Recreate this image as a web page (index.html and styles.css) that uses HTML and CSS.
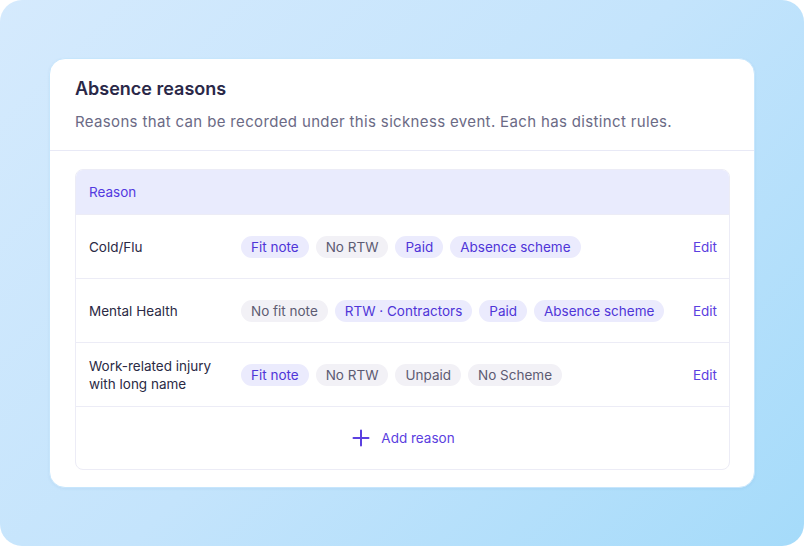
FILE: index.html
```html
<!DOCTYPE html>
<html>
	<head>
		<meta charset="UTF-8">
		<title>Absence reasons</title>
		<link rel="stylesheet" href="styles.css">
	</head>
	<body>
		<div class="stage">
			<div class="panel">
				<div class="panel-head">
					<h2 class="title">Absence reasons</h2>
					<p class="desc">Reasons that can be recorded under this sickness event. Each has distinct rules.</p>
				</div>
				<div class="panel-body">
					<div class="table">
						<div class="thead">Reason</div>

						<div class="row">
							<div class="name">Cold/Flu</div>
							<div class="tags">
								<span class="tag on">Fit note</span>
								<span class="tag">No RTW</span>
								<span class="tag on">Paid</span>
								<span class="tag on">Absence scheme</span>
							</div>
							<a class="edit">Edit</a>
						</div>

						<div class="row">
							<div class="name">Mental Health</div>
							<div class="tags">
								<span class="tag">No fit note</span>
								<span class="tag on">RTW · Contractors</span>
								<span class="tag on">Paid</span>
								<span class="tag on">Absence scheme</span>
							</div>
							<a class="edit">Edit</a>
						</div>

						<div class="row">
							<div class="name">Work-related injury<br>with long name</div>
							<div class="tags">
								<span class="tag on">Fit note</span>
								<span class="tag">No RTW</span>
								<span class="tag">Unpaid</span>
								<span class="tag">No Scheme</span>
							</div>
							<a class="edit">Edit</a>
						</div>

						<div class="add-row">
							<a class="add">
								<svg width="18" height="18" viewBox="0 0 18 18"><path d="M9 1.5v15M1.5 9h15" stroke="currentColor" stroke-width="2" stroke-linecap="round"/></svg>
								Add reason
							</a>
						</div>
					</div>
				</div>
			</div>
		</div>
	</body>
</html>
```

FILE: styles.css
```css
* {margin: 0; padding: 0; box-sizing: border-box;}
html, body {height: 100%;}
body {
	background: #fff;
	font-family: Inter, "Noto Sans", sans-serif;
	color: #2b2a45;
}
.stage {
	height: 546px;
	border-radius: 22px;
	background: linear-gradient(135deg, #d5eafd 0%, #c4e4fc 50%, #a5dbfa 100%);
	padding: 58px 49px 0 49px;
}
.panel {
	background: #fff;
	border-radius: 16px;
	border: 1px solid #c7e6fc;
	box-shadow: 0 1px 3px rgba(60, 120, 180, 0.08);
	height: 430px;
}
.panel-head {
	padding: 18px 25px 18px;
	border-bottom: 1px solid #e8e9f6;
}
.title {
	font-size: 18px;
	font-weight: 600;
	color: #2a2848;
	line-height: 23px;
}
.desc {
	margin-top: 12px;
	font-size: 15px;
	letter-spacing: 0.35px;
	color: #6b6a85;
	line-height: 20px;
}
.panel-body {
	padding: 18px 24px 17px 25px;
}
.table {
	border: 1px solid #ececf6;
	border-radius: 8px;
	overflow: hidden;
}
.thead {
	background: #e9ebfd;
	height: 44px;
	line-height: 44px;
	padding-left: 13px;
	font-size: 13.5px;
	color: #5339e0;
}
.row {
	display: flex;
	align-items: center;
	height: 64px;
	padding: 0 12px 0 13px;
	border-top: 1px solid #ececf6;
}
.row:first-of-type {border-top: none;}
.name {
	width: 152px;
	font-size: 13.5px;
	line-height: 18px;
	color: #2b2a45;
}
.tags {
	flex: 1;
	display: flex;
	gap: 7px;
}
.tag {
	height: 22px;
	line-height: 22px;
	padding: 0 10px;
	border-radius: 11px;
	font-size: 13.5px;
	background: #f2f1f6;
	color: #5d5b72;
}
.tag.on {
	background: #ebebfd;
	color: #4f35d8;
}
.edit {
	font-size: 13.5px;
	color: #5b40e0;
	cursor: pointer;
}
.add-row {
	height: 63px;
	border-top: 1px solid #ececf6;
	display: flex;
	align-items: center;
	justify-content: center;
}
.add {
	display: flex;
	align-items: center;
	gap: 11px;
	font-size: 13.5px;
	color: #5b40e0;
	cursor: pointer;
	margin-left: 2px;
}
.add svg {color: #5b40e0;}
```
